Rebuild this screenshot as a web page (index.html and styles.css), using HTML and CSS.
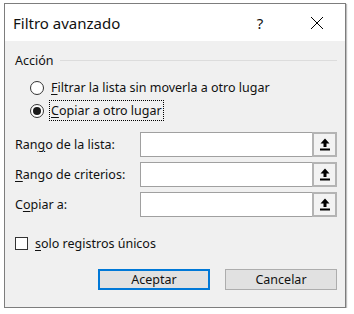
FILE: index.html
```html
<!DOCTYPE html>
<html lang="es">
<head>
    <meta charset="UTF-8">
    <title>Filtro avanzado</title>
    <link rel="stylesheet" href="styles.css">
</head>
<body>
    <div class="dialog">
        <div class="title-bar">
            <span class="title">Filtro avanzado</span>
            <span class="help">?</span>
            <span class="close">
                <svg width="14" height="14" viewBox="0 0 14 14"><path d="M1 1 L13 13 M13 1 L1 13" stroke="#000" stroke-width="1" fill="none"/></svg>
            </span>
        </div>

        <div class="dialog-body">
            <div class="group-head">
                <span>Acción</span>
                <div class="group-line"></div>
            </div>

            <div class="radio-row">
                <span class="radio"></span>
                <span class="radio-label"><u>F</u>iltrar la lista sin moverla a otro lugar</span>
            </div>
            <div class="radio-row">
                <span class="radio checked"></span>
                <span class="radio-label focused"><u>C</u>opiar a otro lugar</span>
            </div>

            <div class="fields">
                <div class="field-row">
                    <label class="field-label">Ran<u>g</u>o de la lista:</label>
                    <div class="field-input"></div>
                    <div class="pick-btn">
                        <svg width="10" height="13" viewBox="0 0 10 13"><path d="M5 0.5 L9.5 5.5 L6.5 5.5 L6.5 9 L3.5 9 L3.5 5.5 L0.5 5.5 Z" fill="#000"/><rect x="0" y="10.5" width="10" height="2" fill="#000"/></svg>
                    </div>
                </div>
                <div class="field-row">
                    <label class="field-label"><u>R</u>ango de criterios:</label>
                    <div class="field-input"></div>
                    <div class="pick-btn">
                        <svg width="10" height="13" viewBox="0 0 10 13"><path d="M5 0.5 L9.5 5.5 L6.5 5.5 L6.5 9 L3.5 9 L3.5 5.5 L0.5 5.5 Z" fill="#000"/><rect x="0" y="10.5" width="10" height="2" fill="#000"/></svg>
                    </div>
                </div>
                <div class="field-row">
                    <label class="field-label">C<u>o</u>piar a:</label>
                    <div class="field-input"></div>
                    <div class="pick-btn">
                        <svg width="10" height="13" viewBox="0 0 10 13"><path d="M5 0.5 L9.5 5.5 L6.5 5.5 L6.5 9 L3.5 9 L3.5 5.5 L0.5 5.5 Z" fill="#000"/><rect x="0" y="10.5" width="10" height="2" fill="#000"/></svg>
                    </div>
                </div>
            </div>

            <div class="check-row">
                <span class="checkbox"></span>
                <span><u>s</u>olo registros únicos</span>
            </div>

            <div class="buttons">
                <button class="btn default">Aceptar</button>
                <button class="btn">Cancelar</button>
            </div>
        </div>
    </div>
</body>
</html>
```

FILE: styles.css
```css
* {
    margin: 0;
    padding: 0;
    box-sizing: border-box;
}

body {
    font-family: 'Noto Sans', 'Open Sans', sans-serif;
    font-size: 12.5px;
    color: #111;
    background: #fff;
}

u {
    text-decoration-thickness: 1px;
    text-underline-offset: 2px;
}

.dialog {
    margin: 3px 0 0 4px;
    width: 342px;
    height: 305px;
    border: 1px solid #7d7d7d;
    box-shadow: 1px 1px 1px rgba(0,0,0,0.25);
    background: #f0f0f0;
    display: flex;
    flex-direction: column;
}

.title-bar {
    height: 37px;
    background: #fff;
    display: flex;
    align-items: center;
    padding-left: 8px;
}

.title {
    font-size: 15px;
    flex: 1;
}

.help {
    font-size: 15px;
    width: 20px;
    text-align: center;
    margin-right: 40px;
}

.close {
    width: 14px;
    height: 14px;
    margin-right: 21px;
    display: flex;
}

.dialog-body {
    padding: 0 8px 0 10px;
}

.group-head {
    margin-top: 11px;
    height: 16px;
    display: flex;
    align-items: center;
}

.group-line {
    flex: 1;
    height: 1px;
    background: #dcdcdc;
    margin-left: 6px;
}

.radio-row {
    height: 23px;
    display: flex;
    align-items: center;
    padding-left: 15px;
}

.group-head + .radio-row {
    margin-top: 8px;
}

.radio {
    width: 14px;
    height: 14px;
    border: 1px solid #333;
    border-radius: 50%;
    background: #fff;
    margin-right: 5px;
    display: flex;
    align-items: center;
    justify-content: center;
}

.radio.checked::after {
    content: '';
    width: 8px;
    height: 8px;
    border-radius: 50%;
    background: #1a1a1a;
}

.radio-label {
    padding: 1px 1px;
    border: 1px solid transparent;
}

.radio-label.focused {
    border: 1px dotted #000;
}

.fields {
    margin-top: 10px;
    display: flex;
    flex-direction: column;
    gap: 5px;
}

.field-row {
    height: 25px;
    display: flex;
    align-items: center;
}

.field-label {
    width: 125px;
}

.field-input {
    width: 172px;
    height: 25px;
    background: #fff;
    border: 1px solid #a0a0a0;
    border-right: none;
}

.pick-btn {
    width: 25px;
    height: 25px;
    background: #f3f3f3;
    border: 2px solid #b4b4b4;
    display: flex;
    align-items: center;
    justify-content: center;
}

.check-row {
    margin-top: 20px;
    height: 13px;
    display: flex;
    align-items: center;
    gap: 7px;
}

.checkbox {
    width: 13px;
    height: 13px;
    border: 1px solid #333;
    background: #fff;
}

.buttons {
    margin-top: 19px;
    display: flex;
    justify-content: flex-end;
    gap: 15px;
}

.btn {
    width: 112px;
    height: 21px;
    font-family: inherit;
    font-size: 12.5px;
    background: #e1e1e1;
    border: 1px solid #adadad;
    color: #111;
}

.btn.default {
    border: 2px solid #0078d7;
}
```
